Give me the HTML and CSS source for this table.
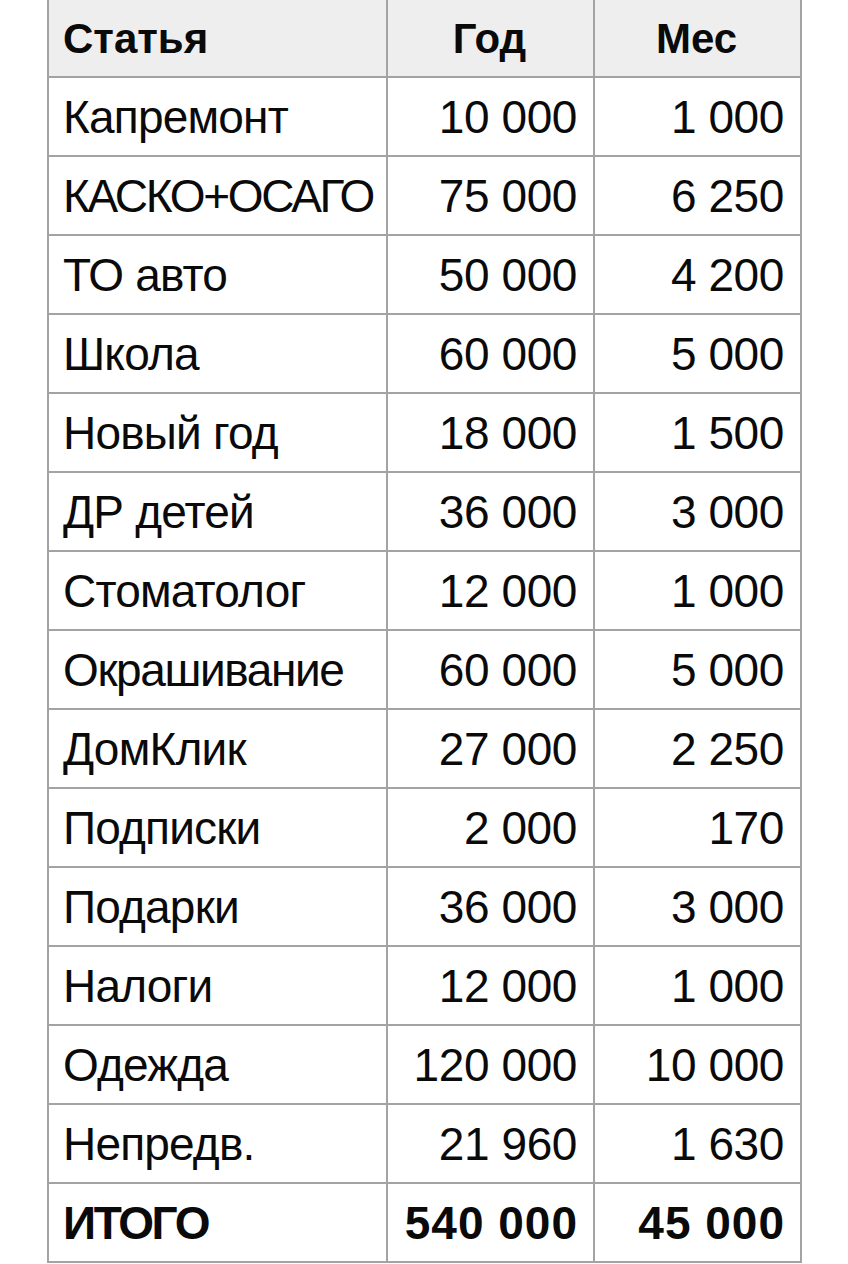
FILE: index.html
```html
<!DOCTYPE html>
<html lang="ru">
<head>
<meta charset="utf-8">
<link rel="stylesheet" href="styles.css">
</head>
<body>
<table class="budget">
  <colgroup>
    <col class="c-name">
    <col class="c-year">
    <col class="c-month">
  </colgroup>
  <thead>
    <tr class="head">
      <th class="name">Статья</th>
      <th class="num-h">Год</th>
      <th class="num-h">Мес</th>
    </tr>
  </thead>
  <tbody>
    <tr><td class="name">Капремонт</td><td class="num">10&nbsp;000</td><td class="num">1&nbsp;000</td></tr>
    <tr><td class="name name-caps">КАСКО+ОСАГО</td><td class="num">75&nbsp;000</td><td class="num">6&nbsp;250</td></tr>
    <tr><td class="name">ТО авто</td><td class="num">50&nbsp;000</td><td class="num">4&nbsp;200</td></tr>
    <tr><td class="name">Школа</td><td class="num">60&nbsp;000</td><td class="num">5&nbsp;000</td></tr>
    <tr><td class="name">Новый год</td><td class="num">18&nbsp;000</td><td class="num">1&nbsp;500</td></tr>
    <tr><td class="name">ДР детей</td><td class="num">36&nbsp;000</td><td class="num">3&nbsp;000</td></tr>
    <tr><td class="name">Стоматолог</td><td class="num">12&nbsp;000</td><td class="num">1&nbsp;000</td></tr>
    <tr><td class="name name-tight">Окрашивание</td><td class="num">60&nbsp;000</td><td class="num">5&nbsp;000</td></tr>
    <tr><td class="name">ДомКлик</td><td class="num">27&nbsp;000</td><td class="num">2&nbsp;250</td></tr>
    <tr><td class="name">Подписки</td><td class="num">2&nbsp;000</td><td class="num">170</td></tr>
    <tr><td class="name">Подарки</td><td class="num">36&nbsp;000</td><td class="num">3&nbsp;000</td></tr>
    <tr><td class="name">Налоги</td><td class="num">12&nbsp;000</td><td class="num">1&nbsp;000</td></tr>
    <tr><td class="name">Одежда</td><td class="num">120&nbsp;000</td><td class="num">10&nbsp;000</td></tr>
    <tr><td class="name">Непредв.</td><td class="num">21&nbsp;960</td><td class="num">1&nbsp;630</td></tr>
    <tr class="total"><td class="name">ИТОГО</td><td class="num">540&nbsp;000</td><td class="num">45&nbsp;000</td></tr>
  </tbody>
</table>
</body>
</html>
```
FILE: styles.css
```css
html, body {
  margin: 0;
  padding: 0;
  background: #ffffff;
}

body {
  font-family: "Liberation Sans", Arial, sans-serif;
  color: #0a0a0a;
}

.budget {
  margin-left: 47px;
  border-collapse: collapse;
  table-layout: fixed;
  width: 753px;
  font-size: 46px;
}

.c-name { width: 339px; }
.c-year { width: 207px; }
.c-month { width: 207px; }

.budget th,
.budget td {
  border: 2px solid #a3a3a3;
  padding: 0 16px 0 14px;
  white-space: nowrap;
}

.budget thead th {
  border-top: none;
}

.head {
  height: 77px;
  background: #eeeeee;
  font-size: 42px;
}

.head th {
  font-weight: bold;
  padding-top: 2px;
}

.budget tbody tr {
  height: 79px;
}

.name {
  text-align: left;
}

.budget td.name {
  letter-spacing: -0.8px;
}

.budget td.name-caps {
  letter-spacing: -2.3px;
}

.budget td.name-tight {
  letter-spacing: -1.4px;
}

.num {
  text-align: right;
  letter-spacing: -0.4px;
}

.budget td.num {
  padding-right: 16px;
}

.num-h {
  text-align: center;
}

.total td {
  font-weight: bold;
}

.budget .total td.name {
  letter-spacing: -2.4px;
}

.budget .total td.num {
  letter-spacing: 1px;
  padding-right: 15px;
}
```
